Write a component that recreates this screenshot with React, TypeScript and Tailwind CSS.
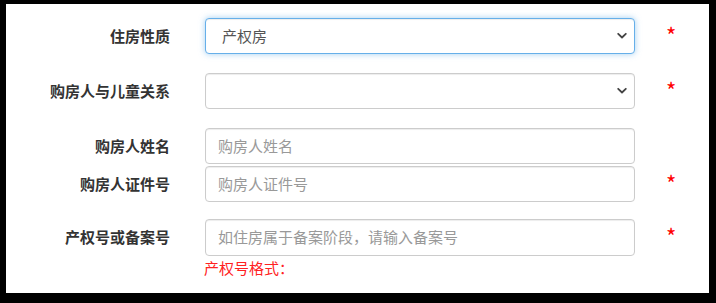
import React from "react";

const font = { fontFamily: '"Microsoft YaHei", "Noto Sans CJK SC", "Noto Sans", sans-serif' };

function Chevron() {
  return (
    <svg
      className="absolute right-[8px] top-1/2 -translate-y-1/2 pointer-events-none"
      width="10"
      height="7"
      viewBox="0 0 10 7"
      fill="none"
    >
      <path d="M1.2 1.3 L5 5 L8.8 1.3" stroke="#444" strokeWidth="1.8" strokeLinecap="round" strokeLinejoin="round" />
    </svg>
  );
}

function Row({
  label,
  children,
  required,
  className,
}: {
  label: string;
  children: React.ReactNode;
  required?: boolean;
  className?: string;
}) {
  return (
    <div className={"flex items-center h-[36px] " + (className ?? "")}>
      <div className="w-[164px] text-right text-[15px] font-bold text-[#333] leading-[20px]">{label}</div>
      <div className="ml-[35px] w-[430px] h-full relative">{children}</div>
      {required && <div className="ml-[31px] text-[22px] leading-[24px] text-[#f00] -mt-[4px]">*</div>}
    </div>
  );
}

export default function App() {
  return (
    <div className="w-[716px] h-[303px] bg-black pt-[4px] pl-[6px]" style={font}>
      <div className="w-[703px] h-[289px] bg-white pt-[14px]">
        <Row label="住房性质" required>
          <div className="h-full w-full rounded-[4px] border border-[#66afe9] shadow-[inset_0_1px_1px_rgba(0,0,0,0.075),0_0_6px_rgba(102,175,233,0.6)] bg-white flex items-center pl-[16px] text-[15px] text-[#555]">
            产权房
          </div>
          <Chevron />
        </Row>
        <Row label="购房人与儿童关系" required className="mt-[19px]">
          <div className="h-full w-full rounded-[4px] border border-[#ccc] shadow-[inset_0_1px_1px_rgba(0,0,0,0.075)] bg-white" />
          <Chevron />
        </Row>
        <Row label="购房人姓名" className="mt-[19px]">
          <div className="h-full w-full rounded-[4px] border border-[#ccc] shadow-[inset_0_1px_1px_rgba(0,0,0,0.075)] bg-white flex items-center pl-[12px] text-[15px] text-[#999]">
            购房人姓名
          </div>
        </Row>
        <Row label="购房人证件号" required className="mt-[2px]">
          <div className="h-full w-full rounded-[4px] border border-[#ccc] shadow-[inset_0_1px_1px_rgba(0,0,0,0.075)] bg-white flex items-center pl-[12px] text-[15px] text-[#999]">
            购房人证件号
          </div>
        </Row>
        <Row label="产权号或备案号" required className="mt-[17px]">
          <div className="h-[37px] w-full rounded-[4px] border border-[#ccc] shadow-[inset_0_1px_1px_rgba(0,0,0,0.075)] bg-white flex items-center pl-[12px] text-[15px] text-[#999]">
            如住房属于备案阶段，请输入备案号
          </div>
        </Row>
        <div className="ml-[198px] mt-[3px] text-[15px] leading-[20px] text-[#f22]">产权号格式：</div>
      </div>
    </div>
  );
}
